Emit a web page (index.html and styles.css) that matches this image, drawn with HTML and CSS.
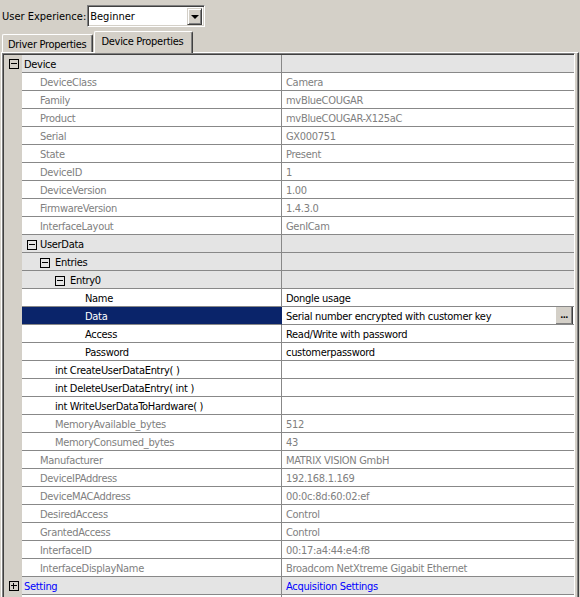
FILE: index.html
```html
<!DOCTYPE html>
<html>
<head>
<meta charset="utf-8">
<link rel="stylesheet" href="styles.css">
</head>
<body>
<div class="topbar">
  <span class="label">User Experience:</span>
  <div class="combo">
    <span class="combo-text">Beginner</span>
    <span class="combo-btn"><span class="arrow"></span></span>
  </div>
</div>
<div class="tabs">
  <div class="tab">Driver Properties</div>
  <div class="tab active">Device Properties</div>
</div>
<div class="panel">
  <div class="grid">
    <div class="grid-inner">
      <div class="row cat"><div class="gut"><span class="box minus"></span></div><div class="name l0">Device</div><div class="val"></div></div>
      <div class="row ro"><div class="gut"></div><div class="name l1">DeviceClass</div><div class="val">Camera</div></div>
      <div class="row ro"><div class="gut"></div><div class="name l1">Family</div><div class="val">mvBlueCOUGAR</div></div>
      <div class="row ro"><div class="gut"></div><div class="name l1">Product</div><div class="val">mvBlueCOUGAR-X125aC</div></div>
      <div class="row ro"><div class="gut"></div><div class="name l1">Serial</div><div class="val">GX000751</div></div>
      <div class="row ro"><div class="gut"></div><div class="name l1">State</div><div class="val">Present</div></div>
      <div class="row ro"><div class="gut"></div><div class="name l1">DeviceID</div><div class="val">1</div></div>
      <div class="row ro"><div class="gut"></div><div class="name l1">DeviceVersion</div><div class="val">1.00</div></div>
      <div class="row ro"><div class="gut"></div><div class="name l1">FirmwareVersion</div><div class="val">1.4.3.0</div></div>
      <div class="row ro"><div class="gut"></div><div class="name l1">InterfaceLayout</div><div class="val">GenICam</div></div>
      <div class="row cat"><div class="gut"></div><div class="name c1"><span class="box minus"></span>UserData</div><div class="val"></div></div>
      <div class="row cat"><div class="gut"></div><div class="name c2"><span class="box minus"></span>Entries</div><div class="val"></div></div>
      <div class="row cat"><div class="gut"></div><div class="name c3"><span class="box minus"></span>Entry0</div><div class="val"></div></div>
      <div class="row"><div class="gut"></div><div class="name l4">Name</div><div class="val">Dongle usage</div></div>
      <div class="row sel"><div class="gut"></div><div class="name l4">Data</div><div class="val"><span class="val-text">Serial number encrypted with customer key</span><span class="dots">...</span></div></div>
      <div class="row"><div class="gut"></div><div class="name l4">Access</div><div class="val">Read/Write with password</div></div>
      <div class="row"><div class="gut"></div><div class="name l4">Password</div><div class="val">customerpassword</div></div>
      <div class="row"><div class="gut"></div><div class="name l2">int CreateUserDataEntry( )</div><div class="val"></div></div>
      <div class="row"><div class="gut"></div><div class="name l2">int DeleteUserDataEntry( int )</div><div class="val"></div></div>
      <div class="row"><div class="gut"></div><div class="name l2">int WriteUserDataToHardware( )</div><div class="val"></div></div>
      <div class="row ro"><div class="gut"></div><div class="name l2">MemoryAvailable_bytes</div><div class="val">512</div></div>
      <div class="row ro"><div class="gut"></div><div class="name l2">MemoryConsumed_bytes</div><div class="val">43</div></div>
      <div class="row ro"><div class="gut"></div><div class="name l1">Manufacturer</div><div class="val">MATRIX VISION GmbH</div></div>
      <div class="row ro"><div class="gut"></div><div class="name l1">DeviceIPAddress</div><div class="val">192.168.1.169</div></div>
      <div class="row ro"><div class="gut"></div><div class="name l1">DeviceMACAddress</div><div class="val">00:0c:8d:60:02:ef</div></div>
      <div class="row ro"><div class="gut"></div><div class="name l1">DesiredAccess</div><div class="val">Control</div></div>
      <div class="row ro"><div class="gut"></div><div class="name l1">GrantedAccess</div><div class="val">Control</div></div>
      <div class="row ro"><div class="gut"></div><div class="name l1">InterfaceID</div><div class="val">00:17:a4:44:e4:f8</div></div>
      <div class="row ro"><div class="gut"></div><div class="name l1">InterfaceDisplayName</div><div class="val">Broadcom NetXtreme Gigabit Ethernet</div></div>
      <div class="row cat link"><div class="gut"><span class="box plus"></span></div><div class="name l0">Setting</div><div class="val">Acquisition Settings</div></div>
      <div class="row"><div class="gut"></div><div class="name l1"></div><div class="val"></div></div>
    </div>
  </div>
</div>
</body>
</html>
```

FILE: styles.css
```css
* { box-sizing: border-box; }
html, body { height: 100%; }
body {
  margin: 0;
  background: #d4d0c8;
  font-family: "DejaVu Sans Condensed", "DejaVu Sans", sans-serif;
  font-stretch: condensed;
  font-size: 11px;
  letter-spacing: -0.3px;
  color: #000;
  overflow: hidden;
}

.topbar {
  height: 31px;
  padding: 5px 0 0 2px;
  display: flex;
  align-items: flex-start;
}
.label {
  line-height: 23px;
  margin-right: 1px;
  letter-spacing: 0;
}
.combo {
  width: 118px;
  height: 22px;
  background: #fff;
  border: 1px solid;
  border-color: #808080 #fff #fff #808080;
  box-shadow: inset 1px 1px 0 #404040, inset -1px -1px 0 #d4d0c8;
  display: flex;
  align-items: center;
  padding: 1px 2px 1px 2px;
}
.combo-text {
  flex: 1;
  line-height: 18px;
  padding-top: 1px;
  letter-spacing: 0;
}
.combo-btn {
  width: 15px;
  height: 17px;
  background: #d4d0c8;
  border: 1px solid;
  border-color: #d4d0c8 #404040 #404040 #d4d0c8;
  box-shadow: inset 1px 1px 0 #fff, inset -1px -1px 0 #808080;
  display: flex;
  align-items: center;
  justify-content: center;
}
.arrow {
  width: 0;
  height: 0;
  border-left: 4px solid transparent;
  border-right: 4px solid transparent;
  border-top: 4px solid #000;
  margin-top: 1px;
}

.tabs {
  height: 21px;
  display: flex;
  align-items: flex-end;
  padding-left: 2px;
}
.tab {
  height: 18px;
  padding: 1px 6px 0 5px;
  line-height: 17px;
  border-top: 1px solid #fff;
  border-left: 1px solid #fff;
  border-right: 1px solid #404040;
  box-shadow: inset -1px 0 0 #808080;
  border-radius: 2px 2px 0 0;
  background: #d4d0c8;
}
.tab.active {
  height: 22px;
  margin-bottom: -1px;
  margin-left: 1px;
  padding: 0 9px 0 6px;
  line-height: 19px;
  position: relative;
  z-index: 1;
}

.panel {
  margin: 0 1px;
  height: 560px;
  border-top: 1px solid #fff;
  border-left: 1px solid #fff;
  border-right: 1px solid #404040;
  box-shadow: inset -1px 0 0 #808080;
  padding-right: 3px;
}
.grid {
  border-top: 1px solid #808080;
  border-left: 1px solid #808080;
  border-right: 1px solid #fff;
}
.grid-inner {
  border-top: 1px solid #404040;
  border-left: 1px solid #404040;
}

.row {
  display: flex;
  height: 18px;
  line-height: 15px;
  white-space: nowrap;
}
.gut {
  width: 18px;
  flex: none;
  background: #d4d0c8;
  display: flex;
  align-items: center;
  padding-left: 5px;
}
.name {
  width: 260px;
  flex: none;
  border-right: 1px solid #888;
  border-bottom: 1px solid #888;
  display: flex;
  align-items: center;
  padding-top: 2px;
  background: #fff;
  overflow: hidden;
}
.val {
  flex: 1;
  border-bottom: 1px solid #888;
  background: #fff;
  padding-left: 4px;
  padding-top: 2px;
  display: flex;
  align-items: center;
  overflow: hidden;
}
.l0 { padding-left: 2px; }
.l1 { padding-left: 18px; }
.l2 { padding-left: 33px; }
.l4 { padding-left: 63px; }
.c1 { padding-left: 5px; }
.c1 .box { margin-right: 3px; }
.c2 { padding-left: 18px; }
.c2 .box { margin-right: 5px; }
.c3 { padding-left: 33px; }
.c3 .box { margin-right: 5px; }

.cat .name, .cat .val { background: #e4e4e4; }
.ro .name, .ro .val { color: #808080; }
.link .name, .link .val { color: #0000ff; }

.sel .name {
  background: #0a246a;
  color: #fff;
  border-right-color: #0a246a;
}
.sel .val { padding-right: 1px; }
.val-text { flex: 1; }
.dots {
  align-self: stretch;
  width: 18px;
  margin-top: -3px;
  margin-bottom: -1px;
  padding-top: 2px;
  background: #d4d0c8;
  border: 1px solid;
  border-color: #fff #404040 #404040 #fff;
  box-shadow: inset -1px -1px 0 #808080;
  font-size: 9px;
  font-weight: bold;
  line-height: 12px;
  text-align: center;
  letter-spacing: -0.5px;
  color: #000;
}

.box {
  width: 10px;
  height: 10px;
  flex: none;
  border: 1px solid #000;
  position: relative;
  background: transparent;
}
.box::before {
  content: "";
  position: absolute;
  left: 1px;
  top: 3px;
  width: 6px;
  height: 1px;
  background: #000;
}
.box.plus::after {
  content: "";
  position: absolute;
  left: 3px;
  top: 1px;
  width: 1px;
  height: 6px;
  background: #000;
}
```
